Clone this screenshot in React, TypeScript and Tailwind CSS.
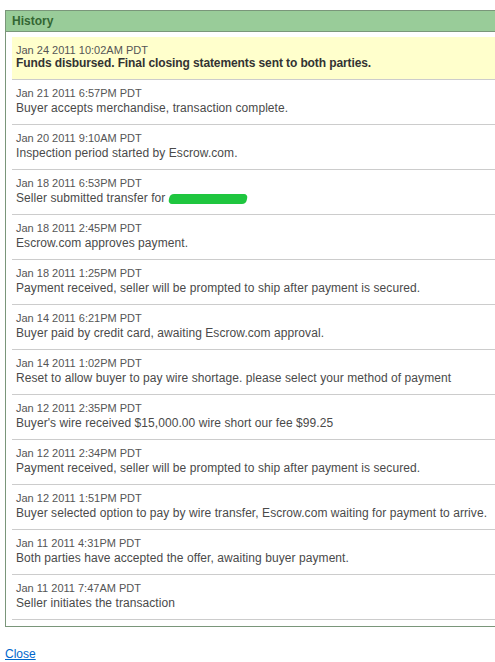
import React from 'react';

interface HistoryEntry {
    date: string;
    text: React.ReactNode;
}

const entries: HistoryEntry[] = [
    { date: 'Jan 21 2011 6:57PM PDT', text: 'Buyer accepts merchandise, transaction complete.' },
    { date: 'Jan 20 2011 9:10AM PDT', text: 'Inspection period started by Escrow.com.' },
    {
        date: 'Jan 18 2011 6:53PM PDT',
        text: (
            <>
                Seller submitted transfer for{' '}
                <span className="inline-block align-middle w-[78px] h-[10px] bg-[#1fc63f] rounded-[4px] -skew-x-12" />
            </>
        ),
    },
    { date: 'Jan 18 2011 2:45PM PDT', text: 'Escrow.com approves payment.' },
    { date: 'Jan 18 2011 1:25PM PDT', text: 'Payment received, seller will be prompted to ship after payment is secured.' },
    { date: 'Jan 14 2011 6:21PM PDT', text: 'Buyer paid by credit card, awaiting Escrow.com approval.' },
    { date: 'Jan 14 2011 1:02PM PDT', text: 'Reset to allow buyer to pay wire shortage. please select your method of payment' },
    { date: 'Jan 12 2011 2:35PM PDT', text: "Buyer's wire received $15,000.00 wire short our fee $99.25" },
    { date: 'Jan 12 2011 2:34PM PDT', text: 'Payment received, seller will be prompted to ship after payment is secured.' },
    { date: 'Jan 12 2011 1:51PM PDT', text: 'Buyer selected option to pay by wire transfer, Escrow.com waiting for payment to arrive.' },
    { date: 'Jan 11 2011 4:31PM PDT', text: 'Both parties have accepted the offer, awaiting buyer payment.' },
    { date: 'Jan 11 2011 7:47AM PDT', text: 'Seller initiates the transaction' },
];

export default function App() {
    return (
        <div className="w-[495px] h-[662px] overflow-hidden bg-white pt-[10px] pl-[5px] font-['Liberation_Sans',Arial,sans-serif]">
            {/* History panel */}
            <div className="w-[500px] border border-[#7a967a]">
                <div className="h-[21px] bg-[#99cc99] border-b border-[#7a967a] px-[6px] text-[12px] leading-[20px] font-bold text-[#336633]">
                    History
                </div>

                <div className="px-[6px] pt-[5px] pb-[6px]">
                    {/* Latest event */}
                    <div className="bg-[#ffffcc] border-b border-[#cccccc] pl-[4px] pt-[6px] pb-[9px]">
                        <div className="text-[11px] leading-[14px] text-[#555555]">Jan 24 2011 10:02AM PDT</div>
                        <div className="text-[12px] leading-[13px] font-bold text-[#333333] tracking-[-0.1px]">
                            Funds disbursed. Final closing statements sent to both parties.
                        </div>
                    </div>

                    {entries.map((entry, i) => (
                        <div key={i} className="border-b border-[#cccccc] pl-[4px] pt-[6px] pb-[8px]">
                            <div className="text-[11px] leading-[14px] text-[#555555]">{entry.date}</div>
                            <div className="mt-[1px] text-[12px] leading-[15px] text-[#4a4a4a] tracking-[0.07px] whitespace-nowrap">
                                {entry.text}
                            </div>
                        </div>
                    ))}
                </div>
            </div>

            <a href="#" className="block mt-[20px] text-[12px] leading-[15px] text-[#0066cc] underline">
                Close
            </a>
        </div>
    );
}
